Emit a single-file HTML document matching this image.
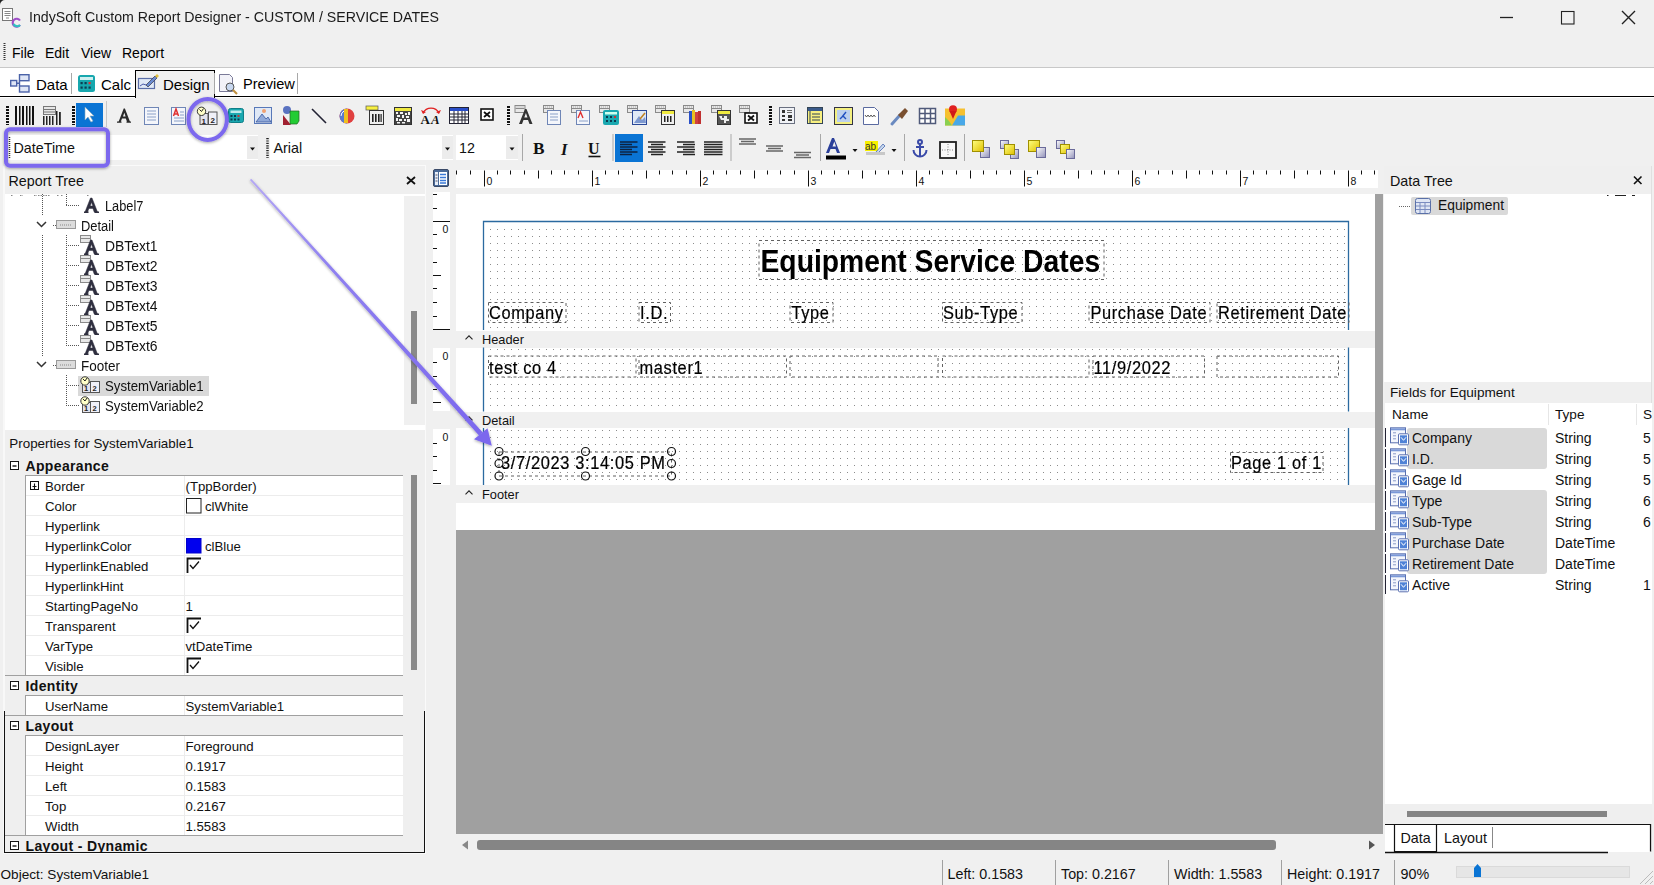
<!DOCTYPE html>
<html><head><meta charset="utf-8">
<style>
*{margin:0;padding:0;box-sizing:border-box}
html,body{width:1654px;height:885px;overflow:hidden;background:#f0f0f0;font-family:"Liberation Sans",sans-serif;color:#000;position:relative}
.a{position:absolute}
.t{position:absolute;white-space:pre;line-height:1}
svg{position:absolute;overflow:visible}
</style></head><body>
<!-- TITLE BAR --><svg id="corner" style="left:0;top:0" width="8" height="8"><path d="M0 0h5a5 5 0 0 0-5 5z" fill="#222"/></svg>
<div class="t" style="left:29px;top:10.0px;font-size:14.2px;color:#1b1b1b;transform:scaleY(1.08);transform-origin:0 12.07px">IndySoft Custom Report Designer - CUSTOM / SERVICE DATES</div>
<svg style="left:0;top:0" width="1654" height="40">
 <!-- app icon -->
 <rect x="2.5" y="8.5" width="10" height="12" fill="#fff" stroke="#777" stroke-width="1"/>
 <path d="M4.5 11.5h6M4.5 13.5h6M4.5 15.5h6M6 18h3" stroke="#888" stroke-width="1"/>
 <path d="M20 20.5a4 4 0 1 0 0 4.5" stroke="#a04fc9" stroke-width="2.2" fill="none"/>
 <path d="M13.5 24a4 4 0 0 0 6.5 1" stroke="#30c0c0" stroke-width="2.2" fill="none"/>
 <!-- window controls -->
 <path d="M1500 17.5h13" stroke="#222" stroke-width="1.3"/>
 <rect x="1561.5" y="11.5" width="12.5" height="12.5" fill="none" stroke="#222" stroke-width="1.1"/>
 <path d="M1622 11l13 13M1635 11l-13 13" stroke="#222" stroke-width="1.4"/>
</svg>
<!-- MENU -->
<svg style="left:0;top:0" width="10" height="70"><path d="M4.5 43v17" stroke="#333" stroke-width="2" stroke-dasharray="1 1"/></svg>
<div class="t" style="left:12px;top:46px;font-size:14px;color:#000">File</div>
<div class="t" style="left:45px;top:46px;font-size:14px">Edit</div>
<div class="t" style="left:81px;top:46px;font-size:14px">View</div>
<div class="t" style="left:122px;top:46px;font-size:14px">Report</div>
<div class="a" style="left:0;top:67px;width:1654px;height:1px;background:#c8c8c8"></div>
<!-- TABS -->
<div class="a" style="left:0;top:68px;width:1654px;height:28px;background:#fff"></div>
<div class="a" style="left:0;top:96px;width:1654px;height:1px;background:#000"></div><div class="a" style="left:0;top:97px;width:1654px;height:1px;background:#fff"></div>
<div class="a" style="left:135px;top:70px;width:80px;height:28px;background:#f0f0f0;border:1px solid #000;border-bottom:none"></div>
<div class="t" style="left:36px;top:77px;font-size:15px">Data</div>
<div class="t" style="left:101px;top:77px;font-size:15px">Calc</div>
<div class="t" style="left:163px;top:77px;font-size:15px">Design</div>
<div class="t" style="left:243px;top:77px;font-size:14.6px">Preview</div>

<svg style="left:0;top:97px" width="1654" height="34">
<defs>
 <g id="grip"><path d="M1.5 9v19" stroke="#111" stroke-width="3" stroke-dasharray="2 1"/></g>
 <g id="dbt"><rect x="0.5" y="0.5" width="10" height="7" fill="#e8e8e8" stroke="#8a8a8a"/><path d="M1 3.5h9" stroke="#8a8a8a"/><path d="M2 2h7" stroke="#aaa" stroke-dasharray="1 1"/></g>
</defs>
<use href="#grip" x="6"/>
<!-- barcode -->
<g fill="#111"><rect x="15" y="9" width="2" height="19"/><rect x="19" y="9" width="1.5" height="19"/><rect x="22" y="9" width="2" height="19"/><rect x="26" y="9" width="1.5" height="19"/><rect x="29" y="9" width="1.5" height="19"/><rect x="32" y="9" width="2" height="19"/></g>
<!-- 2d table barcode -->
<g><rect x="43.5" y="9.5" width="12" height="8" fill="#e6e6e6" stroke="#777"/><path d="M44 12.5h11M44 15h11" stroke="#777"/></g>
<g fill="#222"><rect x="43" y="19" width="1.5" height="9"/><rect x="46" y="19" width="1.5" height="9"/><rect x="49" y="19" width="1.5" height="9"/><rect x="52" y="19" width="1.5" height="9"/><rect x="56" y="14" width="1.5" height="14"/><rect x="59" y="15" width="1.8" height="13"/></g>
<use href="#grip" x="72"/>
<!-- pointer btn -->
<rect x="76" y="6" width="27" height="24" fill="#0a74d4"/>
<path d="M85 10v13l3-3 3 5 2-1-3-5h4z" fill="#fff" stroke="#8ab" stroke-width="0.6"/>
<path d="M106.5 4v26" stroke="#c8c8c8"/>
<!-- A -->
<path d="M118.5 25l5.2-13.5h1.2l5.2 13.5h-3l-1.3-3.6h-3.8l-1.3 3.6z M123 19.5h2.6l-1.3-3.8z" fill="#2a2a2a"/>
<path d="M117 25.2h4.5M126.5 25.2h4.5" stroke="#2a2a2a" stroke-width="1.2"/>
<!-- memo -->
<rect x="144.5" y="10.5" width="14" height="17" fill="#f4f6fb" stroke="#6f86b6"/><path d="M147 14h9M147 17h9M147 20h9M147 23h9" stroke="#8aa0c8"/>
<!-- richtext -->
<rect x="171.5" y="10.5" width="14" height="17" fill="#f4f6fb" stroke="#6f86b6"/><path d="M180 15h4M180 18h4M174 21h10M174 24h10" stroke="#8aa0c8"/><path d="M173.5 19l2.5-7 2.5 7M174.3 17h3.4" stroke="#e03030" stroke-width="1.5" fill="none"/>
<!-- sysvar -->
<rect x="200" y="16.5" width="8" height="11" fill="#e4e4ee" stroke="#555"/><rect x="208.5" y="15" width="8.5" height="12.5" fill="#f0f0f8" stroke="#555"/>
<circle cx="201.5" cy="14.3" r="4.2" fill="#ffffc8" stroke="#333" stroke-width="1"/><path d="M199.5 12.5l2 2 2-3" stroke="#222" fill="none" stroke-width="1"/>
<text x="201.5" y="26.5" font-size="8" font-weight="bold" fill="#222">1</text><text x="210.5" y="25.5" font-size="8" font-weight="bold" fill="#222">2</text>
<!-- calc -->
<rect x="228.5" y="11.5" width="15" height="14" rx="2" fill="#1aa8b0" stroke="#0f7f88"/><rect x="230.5" y="13.5" width="11" height="2.5" fill="#bfeaec"/><g fill="#0b3a50"><rect x="230.5" y="18" width="2" height="2"/><rect x="234" y="18" width="2" height="2"/><rect x="237.5" y="18" width="2" height="2" fill="#c33"/><rect x="230.5" y="21.5" width="2" height="2"/><rect x="234" y="21.5" width="2" height="2"/><rect x="237.5" y="21.5" width="2" height="2"/></g>
<!-- image -->
<rect x="254.5" y="10.5" width="17" height="16" fill="#dfe8f6" stroke="#5878b8"/><path d="M256 25l6-8 4 5 2-2 3 5z" fill="#8fa8d8" stroke="#3a58a0" stroke-width="0.8"/><circle cx="264" cy="14" r="2" fill="#f0a070"/>
<!-- shapes -->
<circle cx="287" cy="13" r="4" fill="#5a72c0"/><path d="M283 18l8 10h-8z" fill="#a02030"/><path d="M290 14h9v10l-2 3h-7z" fill="#22cc33" stroke="#226622" stroke-width="0.7"/>
<!-- line -->
<path d="M312 12l14 14" stroke="#223" stroke-width="1.6"/>
<!-- chart -->
<circle cx="347" cy="19" r="7.5" fill="#e04040"/><path d="M347 11.5a7.5 7.5 0 0 0 0 15z" fill="#5a7ad0"/><rect x="344" y="12" width="4" height="14" fill="#f0c020"/><path d="M341 19a6 6 0 0 1 3-5" stroke="#fff" fill="none"/>
<!-- barcode box -->
<rect x="366" y="9" width="12" height="4" fill="#f8f040" stroke="#555" stroke-width="0.7"/><rect x="369.5" y="13.5" width="14" height="14" fill="#f0f0f0" stroke="#333"/><g fill="#222"><rect x="372" y="17" width="1.6" height="8"/><rect x="375" y="17" width="1.6" height="8"/><rect x="378" y="17" width="1.6" height="8"/><rect x="380.5" y="17" width="1.2" height="8"/></g>
<!-- 2d barcode -->
<rect x="394.5" y="10.5" width="17" height="17" fill="#444" stroke="#333"/><rect x="395" y="11" width="16" height="3" fill="#f0ea40"/><path d="M396 15h2v2h-2zM400 15h3v2h-3zM405 16h2v2h-2zM408 15h2v3h-2zM397 18h3v2h-3zM402 18h2v3h-2zM406 19h3v2h-3zM396 21h2v3h-2zM399 22h3v2h-3zM404 22h2v2h-2zM407 22h3v3h-3zM397 25h3v1.5h-3zM402 25h3v1.5h-3z" fill="#f4f4f4"/>
<!-- AA -->
<path d="M423 16a9 9 0 0 1 16 0" stroke="#e02020" stroke-width="1.3" fill="none"/><path d="M421 13l2 4 3-2zM441 13l-2 4-3-2z" fill="#e02020"/>
<text x="420.5" y="27" font-family="Liberation Serif" font-weight="bold" font-size="13" fill="#111">A</text><text x="431" y="27" font-family="Liberation Serif" font-weight="bold" font-style="italic" font-size="13" fill="#111">A</text>
<!-- calendar -->
<rect x="449.5" y="10.5" width="19" height="16" fill="#fff" stroke="#223"/><rect x="450" y="11" width="18" height="3" fill="#2a4ec8"/><path d="M450 17h18M450 20h18M450 23h18M454 14v12M458 14v12M462 14v12M465 14v12" stroke="#223" stroke-width="1"/>
<!-- X box -->
<rect x="481" y="12" width="12" height="11" fill="#fff" stroke="#111" stroke-width="1.6"/><path d="M484 15l6 5M490 15l-6 5" stroke="#111" stroke-width="1.8"/>
<use href="#grip" x="507"/>
<!-- DB icons -->
<use href="#dbt" x="514.5" y="8"/><path d="M519 27l6-15h1.5l6 15h-3l-1.5-4h-4.5l-1.5 4z M524.3 20.5h3.2l-1.6-4.6z" fill="#333"/>
<use href="#dbt" x="543" y="8"/><rect x="547.5" y="13.5" width="13" height="14" fill="#f4f6fb" stroke="#6f86b6"/><path d="M550 17h8M550 20h8M550 23h8" stroke="#8aa0c8"/>
<use href="#dbt" x="571" y="8"/><rect x="576.5" y="13.5" width="13" height="14" fill="#f4f6fb" stroke="#6f86b6"/><path d="M578 21l2.5-6 2.5 6" stroke="#e03030" stroke-width="1.4" fill="none"/><path d="M579 24h9" stroke="#8aa0c8"/>
<use href="#dbt" x="599" y="8"/><rect x="603" y="13" width="16" height="15" rx="2" fill="#1aa8b0"/><rect x="605" y="15" width="12" height="2.5" fill="#cfe"/><g fill="#0b3a50"><rect x="606" y="19" width="2" height="2"/><rect x="610" y="19" width="2" height="2"/><rect x="614" y="19" width="2" height="2" fill="#c33"/><rect x="606" y="23" width="2" height="2"/><rect x="610" y="23" width="2" height="2"/><rect x="614" y="23" width="2" height="2"/></g>
<use href="#dbt" x="627" y="8"/><rect x="632.5" y="13.5" width="14" height="14" fill="#dfe8f6" stroke="#2a4898"/><path d="M634 26l5-7 3 4 3-3 1 6z" fill="#7d98d0"/><path d="M640 22l5-6" stroke="#c08020" stroke-width="1.5"/>
<use href="#dbt" x="655" y="8"/><rect x="661.5" y="13.5" width="13" height="14" fill="#f0f0f0" stroke="#333"/><rect x="662" y="14" width="12" height="3" fill="#f0ea40"/><g fill="#222"><rect x="664" y="19" width="1.5" height="6"/><rect x="667" y="19" width="1.5" height="6"/><rect x="670" y="19" width="1.5" height="6"/></g>
<use href="#dbt" x="683" y="8"/><rect x="689" y="14" width="3" height="13" fill="#2a50c8"/><rect x="692" y="13" width="3" height="14" fill="#e8c020"/><rect x="695" y="15" width="3" height="12" fill="#d04040"/><rect x="698" y="14" width="3" height="13" fill="#c03030"/>
<use href="#dbt" x="711" y="8"/><rect x="717.5" y="13.5" width="13" height="14" fill="#555" stroke="#333"/><rect x="718" y="14" width="12" height="3" fill="#f0ea40"/><path d="M719 19h3v2h2v-2h3v3h2v2h-3v2h-2v-3h-3z" fill="#eee"/>
<use href="#dbt" x="739" y="8"/><rect x="745" y="16" width="12" height="10" fill="#fff" stroke="#111" stroke-width="1.6"/><path d="M748 18.5l6 5M754 18.5l-6 5" stroke="#111" stroke-width="1.8"/>
<use href="#grip" x="769"/>
<!-- right icons -->
<rect x="779.5" y="10.5" width="15" height="16" fill="#f0f2f6" stroke="#6a7080"/><g fill="#333"><rect x="782" y="13" width="3" height="3"/><rect x="782" y="18" width="3" height="2"/><rect x="782" y="22" width="3" height="2"/><rect x="788" y="18" width="4" height="3"/><rect x="788" y="22" width="4" height="2"/></g><path d="M787 13.5h5M787 15.5h5" stroke="#666"/>
<rect x="807.5" y="10.5" width="15" height="16" fill="#f8f080" stroke="#345"/><rect x="808" y="11" width="14" height="3" fill="#3a5a8a"/><path d="M810 14v12" stroke="#345"/><path d="M812 17h8M812 20h8M812 23h8" stroke="#345"/>
<rect x="834.5" y="10.5" width="18" height="17" fill="#f4f080" stroke="#334"/><rect x="837" y="13" width="13" height="12" fill="#bcd0ee"/><path d="M840 22l3-3 3 3M846 15l-4 5" stroke="#2050c0" stroke-width="1.4" fill="none"/>
<path d="M863.5 10.5h11l4 4v13h-15z" fill="#fff" stroke="#5a6aa0"/><path d="M865 18l1.5 2 1.5-2 1.5 2 1.5-2 1.5 2 1.5-2 1.5 2" stroke="#333" fill="none" stroke-width="0.8"/>
<path d="M892 27l8-9" stroke="#6a8ac0" stroke-width="3" stroke-linecap="round"/><path d="M898 18l4 4 6-8-3-3z" fill="#7a5030"/>
<rect x="919.5" y="11.5" width="16" height="15" fill="#fff" stroke="#505a7a" stroke-width="1.5"/><path d="M925 12v14M930.5 12v14M920 16.5h15M920 21.5h15" stroke="#505a7a" stroke-width="1.5"/>
<rect x="945" y="11.5" width="20" height="17" fill="#f6c030"/><path d="M952 28.5l6-10h7v10z" fill="#48a8e8"/><path d="M945 20l4 4 3 4.5h-7z" fill="#8ad050"/><circle cx="953" cy="12.3" r="4" fill="#e02020"/><path d="M949.5 14l3.5 8 3.5-8z" fill="#d01818"/>
</svg>

<div class="a" style="left:8px;top:135px;width:250px;height:25px;background:#fff"></div>
<div class="a" style="left:247px;top:136px;width:11px;height:23px;background:#ececec"></div>
<div class="t" style="left:13.5px;top:140.5px;font-size:14.3px;color:#111">DateTime</div>
<div class="a" style="left:270px;top:135px;width:183px;height:25px;background:#fff"></div>
<div class="a" style="left:442px;top:136px;width:11px;height:23px;background:#ececec"></div>
<div class="t" style="left:273.5px;top:140.5px;font-size:14.3px;color:#111">Arial</div>
<div class="a" style="left:456px;top:135px;width:62px;height:25px;background:#fff"></div>
<div class="a" style="left:506px;top:136px;width:12px;height:23px;background:#ececec"></div>
<div class="t" style="left:459px;top:140.5px;font-size:14.3px;color:#111">12</div>
<svg style="left:0;top:131px" width="1654" height="34">
 <path d="M250 16.5h5l-2.5 3z" fill="#111"/>
 <path d="M445 16.5h5l-2.5 3z" fill="#111"/>
 <path d="M509.5 16.5h5l-2.5 3z" fill="#111"/>
 <path d="M9.5 6v22" stroke="#333" stroke-width="1.5" stroke-dasharray="1 1"/>
 <path d="M267.5 7v20" stroke="#222" stroke-width="2.5" stroke-dasharray="1.2 1.2"/>
 <path d="M522.5 3v27M613 3v27M731 3v27M820.5 3v27M904.5 3v27M964.5 3v27" stroke="#a8a8a8"/>
 <!-- B I U -->
 <text x="533" y="23.5" font-family="Liberation Serif" font-weight="bold" font-size="16" fill="#111" transform="translate(533 0) scale(1.08 1) translate(-533 0)">B</text>
 <text x="561" y="23.5" font-family="Liberation Serif" font-weight="bold" font-style="italic" font-size="16.5" fill="#111">I</text>
 <text x="588" y="23" font-family="Liberation Serif" font-weight="bold" font-size="16" fill="#111">U</text>
 <path d="M588.5 25.5h12" stroke="#111" stroke-width="1.6"/>
 <!-- align -->
 <rect x="615" y="3" width="28" height="28" fill="#0a74d4"/>
 <g stroke="#0d2240" stroke-width="1.4"><path d="M620 11h17.5M620 13.5h12M620 16h17.5M620 18.5h12M620 21h17.5M620 23.5h12"/></g>
 <g stroke="#222" stroke-width="1.4"><path d="M648 11h17.5M651 13.5h12M648 16h17.5M651 18.5h12M648 21h17.5M651 23.5h12"/>
 <path d="M677 11h17.5M683 13.5h12M677 16h17.5M683 18.5h12M677 21h17.5M683 23.5h12"/>
 <path d="M704 11h18.5M704 13.5h18.5M704 16h18.5M704 18.5h18.5M704 21h18.5M704 23.5h18.5"/></g>
 <g stroke="#666" stroke-width="1.3"><path d="M739 8h17M741 10.5h13M739 13h17"/><path d="M766 15h17M768 17.5h13M766 20h17"/><path d="M794 21.5h17M796 24h13M794 26.5h17"/></g>
 <!-- font color -->
 <path d="M826 22l6-15h2l6 15h-3l-1.5-4h-5l-1.5 4z M832.5 15.5h3.5l-1.7-5z" fill="#2a3f9a"/>
 <rect x="826" y="24.5" width="20" height="4" fill="#000"/>
 <path d="M852.5 18h5l-2.5 3z" fill="#111"/>
 <rect x="865" y="10" width="13" height="10" fill="#f8f000"/>
 <text x="865" y="19" font-size="10" fill="#333">ab</text>
 <path d="M876 21l7-8 2 2-7 7z" fill="#c8d8ee" stroke="#4a6ab0" stroke-width="0.8"/>
 <rect x="866" y="21" width="19" height="3" fill="#c8c8c8"/>
 <path d="M891.5 18h5l-2.5 3z" fill="#111"/>
 <!-- anchor -->
 <g stroke="#3a4aa8" stroke-width="2" fill="none"><circle cx="920" cy="11" r="2"/><path d="M920 13v12M913.5 19a6.5 6.5 0 0 0 13 0"/><path d="M916 16h8"/></g>
 <!-- box -->
 <rect x="940" y="11" width="16" height="16" fill="#fafafa" stroke="#222" stroke-width="1.8"/>
 <path d="M948 13v12M942 19h12" stroke="#666" stroke-width="0.8" stroke-dasharray="1 1.5"/>
 <!-- yellow squares -->
 <defs><linearGradient id="yg" x1="0" y1="0" x2="1" y2="1"><stop offset="0" stop-color="#ffff80"/><stop offset="1" stop-color="#e0c000"/></linearGradient>
 <linearGradient id="wg" x1="0" y1="0" x2="1" y2="1"><stop offset="0" stop-color="#ffffff"/><stop offset="1" stop-color="#9090b8"/></linearGradient></defs>
 <rect x="980.5" y="16.5" width="9" height="10" fill="url(#wg)" stroke="#6a6a9a"/><rect x="972.5" y="9.5" width="11" height="11" fill="url(#yg)" stroke="#a09000"/>
 <rect x="1000.5" y="9.5" width="8" height="8" fill="url(#wg)" stroke="#6a6a9a"/><rect x="1010.5" y="18.5" width="8" height="9" fill="url(#wg)" stroke="#6a6a9a"/><rect x="1004.5" y="13.5" width="10" height="10" fill="url(#yg)" stroke="#a09000"/>
 <rect x="1028.5" y="9.5" width="11" height="11" fill="url(#yg)" stroke="#a09000"/><rect x="1036.5" y="16.5" width="9" height="10" fill="url(#wg)" stroke="#6a6a9a"/>
 <rect x="1056.5" y="9.5" width="8" height="8" fill="url(#wg)" stroke="#6a6a9a"/><rect x="1060.5" y="13.5" width="9" height="9" fill="url(#yg)" stroke="#a09000"/><rect x="1066.5" y="18.5" width="8" height="9" fill="url(#wg)" stroke="#6a6a9a"/>
</svg>

<!--LEFT--><div class="a" style="left:3px;top:166px;width:2px;height:688px;background:#f8f8f8"></div>
<div class="a" style="left:5px;top:165px;width:421px;height:1px;background:#fafafa"></div><div class="a" style="left:425px;top:165px;width:1px;height:689px;background:#fafafa"></div><div class="a" style="left:5px;top:166px;width:420px;height:28px;background:#efefef"></div>
<div class="t" style="left:8.5px;top:173.5px;font-size:14.3px;color:#111">Report Tree</div>
<svg style="left:405px;top:175px" width="12" height="12"><path d="M2 2l8 7M10 2l-8 7" stroke="#111" stroke-width="1.8"/></svg>
<div class="a" style="left:5px;top:194px;width:399px;height:236px;background:#fff"></div><div class="a" style="left:404px;top:194px;width:21px;height:2px;background:#fff"></div>
<div class="a" style="left:404px;top:425px;width:21px;height:5px;background:#fff"></div>
<div class="a" style="left:411px;top:311px;width:6px;height:93px;background:#8a8a8a"></div>
<div class="a" style="left:78px;top:376px;width:131px;height:20px;background:#d9d9d9"></div>
<svg style="left:0;top:0" width="430" height="430">
<path d="M11 195.5h2.5M20 195.5h3M34 195.5h3M38 195.5h12M57 195.5h2M61 195.5h2M87 195.5h1.5" stroke="#888" stroke-width="1" stroke-dasharray="1.5 1"/>
<path d="M42.5 194V216" stroke="#555" stroke-width="1" stroke-dasharray="1 1"/>
<path d="M42.5 235V356" stroke="#555" stroke-width="1" stroke-dasharray="1 1"/>
<path d="M66.5 194V206" stroke="#555" stroke-width="1" stroke-dasharray="1 1"/>
<path d="M66 205.5H80" stroke="#555" stroke-width="1" stroke-dasharray="1 1"/>
<path d="M53 225.5H58" stroke="#555" stroke-width="1" stroke-dasharray="1 1"/>
<path d="M53 365.5H58" stroke="#555" stroke-width="1" stroke-dasharray="1 1"/>
<path d="M66.5 235V346" stroke="#555" stroke-width="1" stroke-dasharray="1 1"/>
<path d="M66 245.5H80" stroke="#555" stroke-width="1" stroke-dasharray="1 1"/>
<path d="M66 265.5H80" stroke="#555" stroke-width="1" stroke-dasharray="1 1"/>
<path d="M66 285.5H80" stroke="#555" stroke-width="1" stroke-dasharray="1 1"/>
<path d="M66 305.5H80" stroke="#555" stroke-width="1" stroke-dasharray="1 1"/>
<path d="M66 325.5H80" stroke="#555" stroke-width="1" stroke-dasharray="1 1"/>
<path d="M66 345.5H80" stroke="#555" stroke-width="1" stroke-dasharray="1 1"/>
<path d="M66.5 375V406" stroke="#555" stroke-width="1" stroke-dasharray="1 1"/>
<path d="M66 385.5H80" stroke="#555" stroke-width="1" stroke-dasharray="1 1"/>
<path d="M66 405.5H80" stroke="#555" stroke-width="1" stroke-dasharray="1 1"/>
<path d="M37 222l4.5 4.5 4.5-4.5" stroke="#333" stroke-width="1.5" fill="none"/>
<path d="M37 362l4.5 4.5 4.5-4.5" stroke="#333" stroke-width="1.5" fill="none"/>
<rect x="56.5" y="220.5" width="19" height="8" fill="#dcdcdc" stroke="#9a9a9a"/><path d="M60 225h11" stroke="#888" stroke-dasharray="1 1"/>
<rect x="56.5" y="360.5" width="19" height="8" fill="#dcdcdc" stroke="#9a9a9a"/><path d="M60 365h11" stroke="#888" stroke-dasharray="1 1"/>
<path d="M85 212l5.5-14h1.5l5.5 14h-3.3l-1.3-3.6h-4l-1.3 3.6z M90.2 206h2.6l-1.3-3.8z" fill="#2e2e3e" stroke="#2e2e3e" stroke-width="0.5" stroke-linejoin="round"/><path d="M84 212.3h4.5M94.5 212.3h4.5" stroke="#2e2e3e" stroke-width="1.5"/>
<rect x="80.5" y="235.5" width="10" height="7" fill="#e8e8e8" stroke="#8a8a8a"/><path d="M81 238.5h9" stroke="#8a8a8a"/>
<path d="M85 254l5.5-14h1.5l5.5 14h-3.3l-1.3-3.6h-4l-1.3 3.6z M90.2 248h2.6l-1.3-3.8z" fill="#2e2e3e" stroke="#2e2e3e" stroke-width="0.5" stroke-linejoin="round"/><path d="M84 254.3h4.5M94.5 254.3h4.5" stroke="#2e2e3e" stroke-width="1.5"/>
<rect x="80.5" y="255.5" width="10" height="7" fill="#e8e8e8" stroke="#8a8a8a"/><path d="M81 258.5h9" stroke="#8a8a8a"/>
<path d="M85 274l5.5-14h1.5l5.5 14h-3.3l-1.3-3.6h-4l-1.3 3.6z M90.2 268h2.6l-1.3-3.8z" fill="#2e2e3e" stroke="#2e2e3e" stroke-width="0.5" stroke-linejoin="round"/><path d="M84 274.3h4.5M94.5 274.3h4.5" stroke="#2e2e3e" stroke-width="1.5"/>
<rect x="80.5" y="275.5" width="10" height="7" fill="#e8e8e8" stroke="#8a8a8a"/><path d="M81 278.5h9" stroke="#8a8a8a"/>
<path d="M85 294l5.5-14h1.5l5.5 14h-3.3l-1.3-3.6h-4l-1.3 3.6z M90.2 288h2.6l-1.3-3.8z" fill="#2e2e3e" stroke="#2e2e3e" stroke-width="0.5" stroke-linejoin="round"/><path d="M84 294.3h4.5M94.5 294.3h4.5" stroke="#2e2e3e" stroke-width="1.5"/>
<rect x="80.5" y="295.5" width="10" height="7" fill="#e8e8e8" stroke="#8a8a8a"/><path d="M81 298.5h9" stroke="#8a8a8a"/>
<path d="M85 314l5.5-14h1.5l5.5 14h-3.3l-1.3-3.6h-4l-1.3 3.6z M90.2 308h2.6l-1.3-3.8z" fill="#2e2e3e" stroke="#2e2e3e" stroke-width="0.5" stroke-linejoin="round"/><path d="M84 314.3h4.5M94.5 314.3h4.5" stroke="#2e2e3e" stroke-width="1.5"/>
<rect x="80.5" y="315.5" width="10" height="7" fill="#e8e8e8" stroke="#8a8a8a"/><path d="M81 318.5h9" stroke="#8a8a8a"/>
<path d="M85 334l5.5-14h1.5l5.5 14h-3.3l-1.3-3.6h-4l-1.3 3.6z M90.2 328h2.6l-1.3-3.8z" fill="#2e2e3e" stroke="#2e2e3e" stroke-width="0.5" stroke-linejoin="round"/><path d="M84 334.3h4.5M94.5 334.3h4.5" stroke="#2e2e3e" stroke-width="1.5"/>
<rect x="80.5" y="335.5" width="10" height="7" fill="#e8e8e8" stroke="#8a8a8a"/><path d="M81 338.5h9" stroke="#8a8a8a"/>
<path d="M85 354l5.5-14h1.5l5.5 14h-3.3l-1.3-3.6h-4l-1.3 3.6z M90.2 348h2.6l-1.3-3.8z" fill="#2e2e3e" stroke="#2e2e3e" stroke-width="0.5" stroke-linejoin="round"/><path d="M84 354.3h4.5M94.5 354.3h4.5" stroke="#2e2e3e" stroke-width="1.5"/>
<rect x="82.5" y="382.5" width="8" height="10" fill="#e4e4ee" stroke="#555"/><rect x="90.5" y="381.5" width="9" height="11" fill="#f0f0f8" stroke="#555"/>
<text x="84" y="391" font-size="7.5" font-weight="bold" fill="#222">1</text><text x="92.5" y="390.5" font-size="7.5" font-weight="bold" fill="#222">2</text>
<circle cx="85" cy="381" r="4.2" fill="#ffffc8" stroke="#333" stroke-width="1"/><path d="M83 379l2 2 2-3" stroke="#222" fill="none" stroke-width="1"/>
<rect x="82.5" y="402.5" width="8" height="10" fill="#e4e4ee" stroke="#555"/><rect x="90.5" y="401.5" width="9" height="11" fill="#f0f0f8" stroke="#555"/>
<text x="84" y="411" font-size="7.5" font-weight="bold" fill="#222">1</text><text x="92.5" y="410.5" font-size="7.5" font-weight="bold" fill="#222">2</text>
<circle cx="85" cy="401" r="4.2" fill="#ffffc8" stroke="#333" stroke-width="1"/><path d="M83 399l2 2 2-3" stroke="#222" fill="none" stroke-width="1"/>
</svg>
<div class="t" style="left:105px;top:200.62px;font-size:12.8px;color:#111;transform:scaleY(1.121);transform-origin:0 10.88px">Label7</div>
<div class="t" style="left:81px;top:220.53px;font-size:12.9px;color:#111;transform:scaleY(1.112);transform-origin:0 10.96px">Detail</div>
<div class="t" style="left:105px;top:239.69px;font-size:13.9px;color:#111;transform:scaleY(1.032);transform-origin:0 11.81px">DBText1</div>
<div class="t" style="left:105px;top:259.69px;font-size:13.9px;color:#111;transform:scaleY(1.032);transform-origin:0 11.81px">DBText2</div>
<div class="t" style="left:105px;top:279.69px;font-size:13.9px;color:#111;transform:scaleY(1.032);transform-origin:0 11.81px">DBText3</div>
<div class="t" style="left:105px;top:299.69px;font-size:13.9px;color:#111;transform:scaleY(1.032);transform-origin:0 11.81px">DBText4</div>
<div class="t" style="left:105px;top:319.69px;font-size:13.9px;color:#111;transform:scaleY(1.032);transform-origin:0 11.81px">DBText5</div>
<div class="t" style="left:105px;top:339.69px;font-size:13.9px;color:#111;transform:scaleY(1.032);transform-origin:0 11.81px">DBText6</div>
<div class="t" style="left:81px;top:360.02px;font-size:13.5px;color:#111;transform:scaleY(1.063);transform-origin:0 11.47px">Footer</div>
<div class="t" style="left:105px;top:380.28px;font-size:13.2px;color:#111;transform:scaleY(1.087);transform-origin:0 11.22px">SystemVariable1</div>
<div class="t" style="left:105px;top:400.28px;font-size:13.2px;color:#111;transform:scaleY(1.087);transform-origin:0 11.22px">SystemVariable2</div>
<div class="a" style="left:5px;top:430px;width:420px;height:424px;background:#efefef"></div>
<div class="t" style="left:9.3px;top:436.5px;font-size:13.4px;color:#111">Properties for SystemVariable1</div>
<div class="a" style="left:25px;top:475px;width:378px;height:377px;background:#fff"></div>
<div class="a" style="left:411px;top:475px;width:6px;height:195px;background:#8a8a8a"></div>
<div class="a" style="left:5px;top:456px;width:398px;height:20px;background:#efefef"></div>
<div class="t" style="left:25.5px;top:459px;font-size:14px;font-weight:bold;letter-spacing:0.35px;color:#111">Appearance</div>
<div class="a" style="left:5px;top:476px;width:20px;height:20px;background:#efefef"></div>
<div class="t" style="left:45px;top:479.5px;font-size:13.2px;color:#111">Border</div>
<div class="t" style="left:185.5px;top:479.5px;font-size:13.2px;color:#111">(TppBorder)</div>
<div class="a" style="left:5px;top:496px;width:20px;height:20px;background:#efefef"></div>
<div class="t" style="left:45px;top:499.5px;font-size:13.2px;color:#111">Color</div>
<div class="t" style="left:205px;top:499.5px;font-size:13.2px;color:#111">clWhite</div>
<div class="a" style="left:5px;top:516px;width:20px;height:20px;background:#efefef"></div>
<div class="t" style="left:45px;top:519.5px;font-size:13.2px;color:#111">Hyperlink</div>
<div class="a" style="left:5px;top:536px;width:20px;height:20px;background:#efefef"></div>
<div class="t" style="left:45px;top:539.5px;font-size:13.2px;color:#111">HyperlinkColor</div>
<div class="t" style="left:205px;top:539.5px;font-size:13.2px;color:#111">clBlue</div>
<div class="a" style="left:5px;top:556px;width:20px;height:20px;background:#efefef"></div>
<div class="t" style="left:45px;top:559.5px;font-size:13.2px;color:#111">HyperlinkEnabled</div>
<div class="a" style="left:5px;top:576px;width:20px;height:20px;background:#efefef"></div>
<div class="t" style="left:45px;top:579.5px;font-size:13.2px;color:#111">HyperlinkHint</div>
<div class="a" style="left:5px;top:596px;width:20px;height:20px;background:#efefef"></div>
<div class="t" style="left:45px;top:599.5px;font-size:13.2px;color:#111">StartingPageNo</div>
<div class="t" style="left:185.5px;top:599.5px;font-size:13.2px;color:#111">1</div>
<div class="a" style="left:5px;top:616px;width:20px;height:20px;background:#efefef"></div>
<div class="t" style="left:45px;top:619.5px;font-size:13.2px;color:#111">Transparent</div>
<div class="a" style="left:5px;top:636px;width:20px;height:20px;background:#efefef"></div>
<div class="t" style="left:45px;top:639.5px;font-size:13.2px;color:#111">VarType</div>
<div class="t" style="left:185.5px;top:639.5px;font-size:13.2px;color:#111">vtDateTime</div>
<div class="a" style="left:5px;top:656px;width:20px;height:20px;background:#efefef"></div>
<div class="t" style="left:45px;top:659.5px;font-size:13.2px;color:#111">Visible</div>
<div class="a" style="left:5px;top:676px;width:398px;height:20px;background:#efefef"></div>
<div class="t" style="left:25.5px;top:679px;font-size:14px;font-weight:bold;letter-spacing:0.35px;color:#111">Identity</div>
<div class="a" style="left:5px;top:696px;width:20px;height:20px;background:#efefef"></div>
<div class="t" style="left:45px;top:699.5px;font-size:13.2px;color:#111">UserName</div>
<div class="t" style="left:185.5px;top:699.5px;font-size:13.2px;color:#111">SystemVariable1</div>
<div class="a" style="left:5px;top:716px;width:398px;height:20px;background:#efefef"></div>
<div class="t" style="left:25.5px;top:719px;font-size:14px;font-weight:bold;letter-spacing:0.35px;color:#111">Layout</div>
<div class="a" style="left:5px;top:736px;width:20px;height:20px;background:#efefef"></div>
<div class="t" style="left:45px;top:739.5px;font-size:13.2px;color:#111">DesignLayer</div>
<div class="t" style="left:185.5px;top:739.5px;font-size:13.2px;color:#111">Foreground</div>
<div class="a" style="left:5px;top:756px;width:20px;height:20px;background:#efefef"></div>
<div class="t" style="left:45px;top:759.5px;font-size:13.2px;color:#111">Height</div>
<div class="t" style="left:185.5px;top:759.5px;font-size:13.2px;color:#111">0.1917</div>
<div class="a" style="left:5px;top:776px;width:20px;height:20px;background:#efefef"></div>
<div class="t" style="left:45px;top:779.5px;font-size:13.2px;color:#111">Left</div>
<div class="t" style="left:185.5px;top:779.5px;font-size:13.2px;color:#111">0.1583</div>
<div class="a" style="left:5px;top:796px;width:20px;height:20px;background:#efefef"></div>
<div class="t" style="left:45px;top:799.5px;font-size:13.2px;color:#111">Top</div>
<div class="t" style="left:185.5px;top:799.5px;font-size:13.2px;color:#111">0.2167</div>
<div class="a" style="left:5px;top:816px;width:20px;height:20px;background:#efefef"></div>
<div class="t" style="left:45px;top:819.5px;font-size:13.2px;color:#111">Width</div>
<div class="t" style="left:185.5px;top:819.5px;font-size:13.2px;color:#111">1.5583</div>
<div class="a" style="left:5px;top:836px;width:398px;height:20px;background:#efefef"></div>
<div class="t" style="left:25.5px;top:839px;font-size:14px;font-weight:bold;letter-spacing:0.35px;color:#111">Layout - Dynamic</div>
<svg style="left:0;top:0" width="430" height="860">
<path d="M25 475.5H403" stroke="#a0a0a0"/>
<rect x="10.5" y="461.5" width="8" height="8" fill="#fff" stroke="#111" stroke-width="1"/><path d="M12.5 466h4" stroke="#111" stroke-width="1.4"/>
<path d="M25.5 476V496" stroke="#a0a0a0"/>
<path d="M26 495.5H403" stroke="#ececec"/>
<path d="M184.5 476V495" stroke="#ececec"/>
<rect x="30.5" y="481.5" width="8" height="8" fill="#fff" stroke="#111"/><path d="M32.5 486.5h4M34.5 483.5v6" stroke="#111" stroke-width="1.1"/>
<path d="M25.5 496V516" stroke="#a0a0a0"/>
<path d="M26 515.5H403" stroke="#ececec"/>
<path d="M184.5 496V515" stroke="#ececec"/>
<rect x="186.5" y="498.5" width="14.5" height="14.5" fill="#fff" stroke="#222"/>
<path d="M25.5 516V536" stroke="#a0a0a0"/>
<path d="M26 535.5H403" stroke="#ececec"/>
<path d="M184.5 516V535" stroke="#ececec"/>
<path d="M25.5 536V556" stroke="#a0a0a0"/>
<path d="M26 555.5H403" stroke="#ececec"/>
<path d="M184.5 536V555" stroke="#ececec"/>
<rect x="186.5" y="538.5" width="14.5" height="14.5" fill="#0000ee" stroke="#0000cc"/>
<path d="M25.5 556V576" stroke="#a0a0a0"/>
<path d="M26 575.5H403" stroke="#ececec"/>
<path d="M184.5 556V575" stroke="#ececec"/>
<path d="M187.5 573V558.5H201" stroke="#111" stroke-width="1.8" fill="none"/><path d="M190 565l3 3.5 6-7" stroke="#111" stroke-width="1.3" fill="none"/>
<path d="M25.5 576V596" stroke="#a0a0a0"/>
<path d="M26 595.5H403" stroke="#ececec"/>
<path d="M184.5 576V595" stroke="#ececec"/>
<path d="M25.5 596V616" stroke="#a0a0a0"/>
<path d="M26 615.5H403" stroke="#ececec"/>
<path d="M184.5 596V615" stroke="#ececec"/>
<path d="M25.5 616V636" stroke="#a0a0a0"/>
<path d="M26 635.5H403" stroke="#ececec"/>
<path d="M184.5 616V635" stroke="#ececec"/>
<path d="M187.5 633V618.5H201" stroke="#111" stroke-width="1.8" fill="none"/><path d="M190 625l3 3.5 6-7" stroke="#111" stroke-width="1.3" fill="none"/>
<path d="M25.5 636V656" stroke="#a0a0a0"/>
<path d="M26 655.5H403" stroke="#ececec"/>
<path d="M184.5 636V655" stroke="#ececec"/>
<path d="M25.5 656V676" stroke="#a0a0a0"/>
<path d="M26 675.5H403" stroke="#ececec"/>
<path d="M184.5 656V675" stroke="#ececec"/>
<path d="M187.5 673V658.5H201" stroke="#111" stroke-width="1.8" fill="none"/><path d="M190 665l3 3.5 6-7" stroke="#111" stroke-width="1.3" fill="none"/>
<path d="M5 675.5H403" stroke="#a0a0a0"/>
<path d="M25 695.5H403" stroke="#a0a0a0"/>
<rect x="10.5" y="681.5" width="8" height="8" fill="#fff" stroke="#111" stroke-width="1"/><path d="M12.5 686h4" stroke="#111" stroke-width="1.4"/>
<path d="M25.5 696V716" stroke="#a0a0a0"/>
<path d="M26 715.5H403" stroke="#ececec"/>
<path d="M184.5 696V715" stroke="#ececec"/>
<path d="M5 715.5H403" stroke="#a0a0a0"/>
<path d="M25 735.5H403" stroke="#a0a0a0"/>
<rect x="10.5" y="721.5" width="8" height="8" fill="#fff" stroke="#111" stroke-width="1"/><path d="M12.5 726h4" stroke="#111" stroke-width="1.4"/>
<path d="M25.5 736V756" stroke="#a0a0a0"/>
<path d="M26 755.5H403" stroke="#ececec"/>
<path d="M184.5 736V755" stroke="#ececec"/>
<path d="M25.5 756V776" stroke="#a0a0a0"/>
<path d="M26 775.5H403" stroke="#ececec"/>
<path d="M184.5 756V775" stroke="#ececec"/>
<path d="M25.5 776V796" stroke="#a0a0a0"/>
<path d="M26 795.5H403" stroke="#ececec"/>
<path d="M184.5 776V795" stroke="#ececec"/>
<path d="M25.5 796V816" stroke="#a0a0a0"/>
<path d="M26 815.5H403" stroke="#ececec"/>
<path d="M184.5 796V815" stroke="#ececec"/>
<path d="M25.5 816V836" stroke="#a0a0a0"/>
<path d="M26 835.5H403" stroke="#ececec"/>
<path d="M184.5 816V835" stroke="#ececec"/>
<path d="M5 835.5H403" stroke="#a0a0a0"/>
<rect x="10.5" y="841.5" width="8" height="8" fill="#fff" stroke="#111" stroke-width="1"/><path d="M12.5 846h4" stroke="#111" stroke-width="1.4"/>
</svg>
<div class="a" style="left:4px;top:711px;width:1px;height:142px;background:#111"></div>
<div class="a" style="left:4px;top:852px;width:421px;height:1px;background:#111"></div><div class="a" style="left:4px;top:853px;width:422px;height:1px;background:#fafafa"></div>
<div class="a" style="left:424px;top:711px;width:1px;height:142px;background:#111"></div>
<div class="t" style="left:0.5px;top:867.5px;font-size:13.6px;color:#111">Object: SystemVariable1</div><!--/LEFT-->
<!--CENTER--><svg style="left:433px;top:169px" width="16" height="18"><rect x="0.5" y="0.5" width="15" height="17" rx="1.5" fill="#4a6a98" stroke="#3a4a68"/><rect x="2" y="3" width="3" height="13" fill="#e8eef8"/><rect x="6" y="3" width="8" height="13" fill="#fff"/><path d="M7 5.5h6M7 8.5h6M7 11.5h6M7 14h6" stroke="#3a7ad8" stroke-width="1.5"/><path d="M2.5 6h2M2.5 9h2M2.5 12h2" stroke="#556"/></svg>
<div class="a" style="left:456px;top:170px;width:922px;height:18px;background:#fff"></div>
<div class="a" style="left:433px;top:192px;width:17px;height:138px;background:#fff"></div>
<div class="a" style="left:433px;top:348px;width:17px;height:63px;background:#fff"></div>
<div class="a" style="left:433px;top:429px;width:17px;height:56px;background:#fff"></div>
<svg style="left:0;top:0" width="1654" height="885">
<path d="M456.5 170.5V174.5M470.5 170.5V174.5M484.5 170.5V186.5M497.5 170.5V174.5M510.5 170.5V174.5M524.5 170.5V174.5M538.5 170.5V178.5M551.5 170.5V174.5M564.5 170.5V174.5M578.5 170.5V174.5M592.5 170.5V186.5M605.5 170.5V174.5M618.5 170.5V174.5M632.5 170.5V174.5M646.5 170.5V178.5M659.5 170.5V174.5M672.5 170.5V174.5M686.5 170.5V174.5M700.5 170.5V186.5M713.5 170.5V174.5M726.5 170.5V174.5M740.5 170.5V174.5M754.5 170.5V178.5M767.5 170.5V174.5M780.5 170.5V174.5M794.5 170.5V174.5M808.5 170.5V186.5M821.5 170.5V174.5M834.5 170.5V174.5M848.5 170.5V174.5M862.5 170.5V178.5M875.5 170.5V174.5M888.5 170.5V174.5M902.5 170.5V174.5M916.5 170.5V186.5M929.5 170.5V174.5M942.5 170.5V174.5M956.5 170.5V174.5M970.5 170.5V178.5M983.5 170.5V174.5M996.5 170.5V174.5M1010.5 170.5V174.5M1024.5 170.5V186.5M1037.5 170.5V174.5M1050.5 170.5V174.5M1064.5 170.5V174.5M1078.5 170.5V178.5M1091.5 170.5V174.5M1104.5 170.5V174.5M1118.5 170.5V174.5M1132.5 170.5V186.5M1145.5 170.5V174.5M1158.5 170.5V174.5M1172.5 170.5V174.5M1186.5 170.5V178.5M1199.5 170.5V174.5M1212.5 170.5V174.5M1226.5 170.5V174.5M1240.5 170.5V186.5M1253.5 170.5V174.5M1266.5 170.5V174.5M1280.5 170.5V174.5M1294.5 170.5V178.5M1307.5 170.5V174.5M1320.5 170.5V174.5M1334.5 170.5V174.5M1348.5 170.5V186.5M1361.5 170.5V174.5M1374.5 170.5V174.5" stroke="#111" stroke-width="1"/>
<text x="486.5" y="185" font-size="10.5" fill="#111">0</text>
<text x="594.5" y="185" font-size="10.5" fill="#111">1</text>
<text x="702.5" y="185" font-size="10.5" fill="#111">2</text>
<text x="810.5" y="185" font-size="10.5" fill="#111">3</text>
<text x="918.5" y="185" font-size="10.5" fill="#111">4</text>
<text x="1026.5" y="185" font-size="10.5" fill="#111">5</text>
<text x="1134.5" y="185" font-size="10.5" fill="#111">6</text>
<text x="1242.5" y="185" font-size="10.5" fill="#111">7</text>
<text x="1350.5" y="185" font-size="10.5" fill="#111">8</text>
<path d="M433 194.5h4M433 208.5h4M433 221.5h17M433 234.5h4M433 248.5h4M433 262.5h4M433 275.5h8M433 288.5h4M433 302.5h4M433 316.5h4M433 329.5h17M433 362.5h4M433 376.5h4M433 389.5h4M433 402.5h8M433 443.5h4M433 456.5h4M433 470.5h4M433 483.5h8" stroke="#111" stroke-width="1.2"/>
<text x="442.5" y="233" font-size="10.5" fill="#111">0</text>
<text x="442.5" y="360" font-size="10.5" fill="#111">0</text>
<text x="442.5" y="441" font-size="10.5" fill="#111">0</text>
</svg>
<div class="a" style="left:456px;top:193.5px;width:919px;height:137px;background:#fff"></div>
<div class="a" style="left:456px;top:347.5px;width:919px;height:64px;background:#fff"></div>
<div class="a" style="left:456px;top:428px;width:919px;height:57px;background:#fff"></div>
<div class="a" style="left:456px;top:502.5px;width:919px;height:27.5px;background:#fff"></div>
<div class="a" style="left:456px;top:530px;width:927px;height:304px;background:#a0a0a0"></div>
<div class="a" style="left:1375px;top:194px;width:8px;height:340px;background:#a0a0a0"></div>
<svg style="left:0;top:0" width="1654" height="885">
<defs><pattern id="dots" x="483" y="222" width="7" height="7" patternUnits="userSpaceOnUse"><rect x="0" y="0" width="1" height="1" fill="#8c8c8c"/></pattern>
<pattern id="dots2" x="483" y="349" width="7" height="7" patternUnits="userSpaceOnUse"><rect x="0" y="0" width="1" height="1" fill="#8c8c8c"/></pattern>
<pattern id="dots3" x="483" y="430" width="7" height="7" patternUnits="userSpaceOnUse"><rect x="0" y="0" width="1" height="1" fill="#8c8c8c"/></pattern></defs>
<rect x="490" y="229" width="856" height="100" fill="url(#dots)"/>
<rect x="490" y="349" width="856" height="62" fill="url(#dots2)"/>
<rect x="490" y="430" width="856" height="55" fill="url(#dots3)"/>
<path d="M483.5 330V221.5H1348.5V330M483.5 347.5V411.5M1348.5 347.5V411.5M483.5 428V485M1348.5 428V485" stroke="#2b6aa0" stroke-width="1.3" fill="none"/>
<path d="M465.5 339.3l3.5-3.5 3.5 3.5" stroke="#222" stroke-width="1.1" fill="none"/>
<path d="M465.5 420.3l3.5-3.5 3.5 3.5" stroke="#222" stroke-width="1.1" fill="none"/>
<path d="M465.5 494.3l3.5-3.5 3.5 3.5" stroke="#222" stroke-width="1.1" fill="none"/>
</svg>
<div class="t" style="left:482px;top:333.7px;font-size:12.8px;color:#111">Header</div>
<div class="t" style="left:482px;top:414.7px;font-size:12.8px;color:#111">Detail</div>
<div class="t" style="left:482px;top:488.7px;font-size:12.8px;color:#111">Footer</div>
<svg style="left:0;top:0" width="1654" height="885"><g fill="none" stroke="#606060" stroke-width="1" stroke-dasharray="3 3">
<rect x="759" y="240.5" width="345" height="39.0"/>
<rect x="488.5" y="302.5" width="77.5" height="20.0"/>
<rect x="639" y="302.5" width="31.5" height="20.0"/>
<rect x="790" y="302.5" width="43" height="20.0"/>
<rect x="942.5" y="302.5" width="79.5" height="20.0"/>
<rect x="1089" y="302.5" width="121" height="20.0"/>
<rect x="1217" y="302.5" width="132" height="20.0"/>
<rect x="488.5" y="356" width="147.5" height="21"/>
<rect x="639" y="356" width="147.5" height="21"/>
<rect x="790" y="356" width="148" height="21"/>
<rect x="942.5" y="356" width="146.5" height="21"/>
<rect x="1093" y="356" width="111.5" height="21"/>
<rect x="1217" y="356" width="121.5" height="21"/>
<rect x="499" y="452" width="172.5" height="24"/>
<rect x="1230.5" y="452.5" width="92.5" height="20.0"/>
</g>
<circle cx="499" cy="451.5" r="4" fill="none" stroke="#111" stroke-width="1.2"/>
<circle cx="499" cy="463.5" r="4" fill="none" stroke="#111" stroke-width="1.2"/>
<circle cx="499" cy="476" r="4" fill="none" stroke="#111" stroke-width="1.2"/>
<circle cx="585.5" cy="451.5" r="4" fill="none" stroke="#111" stroke-width="1.2"/>
<circle cx="585.5" cy="476" r="4" fill="none" stroke="#111" stroke-width="1.2"/>
<circle cx="671.5" cy="451.5" r="4" fill="none" stroke="#111" stroke-width="1.2"/>
<circle cx="671.5" cy="463.5" r="4" fill="none" stroke="#111" stroke-width="1.2"/>
<circle cx="671.5" cy="476" r="4" fill="none" stroke="#111" stroke-width="1.2"/>
</svg>
<div class="t" style="left:760.5px;top:247.84px;font-size:28.3px;font-weight:bold;color:#000;transform:scaleY(1.12);transform-origin:0 23.96px">Equipment Service Dates</div>
<div class="t" style="left:489px;top:305.42px;font-size:16.4px;letter-spacing:0.65px;color:#000;-webkit-text-stroke:0.2px #000;transform:scaleY(1.065);transform-origin:0 13.88px">Company</div>
<div class="t" style="left:640px;top:305.42px;font-size:16.4px;letter-spacing:0.65px;color:#000;-webkit-text-stroke:0.2px #000;transform:scaleY(1.065);transform-origin:0 13.88px">I.D.</div>
<div class="t" style="left:791.5px;top:305.42px;font-size:16.4px;letter-spacing:0.65px;color:#000;-webkit-text-stroke:0.2px #000;transform:scaleY(1.065);transform-origin:0 13.88px">Type</div>
<div class="t" style="left:943px;top:305.42px;font-size:16.4px;letter-spacing:0.65px;color:#000;-webkit-text-stroke:0.2px #000;transform:scaleY(1.065);transform-origin:0 13.88px">Sub-Type</div>
<div class="t" style="left:1090.4px;top:305.42px;font-size:16.4px;letter-spacing:0.65px;color:#000;-webkit-text-stroke:0.2px #000;transform:scaleY(1.065);transform-origin:0 13.88px">Purchase Date</div>
<div class="t" style="left:1218px;top:305.42px;font-size:16.4px;letter-spacing:0.65px;color:#000;-webkit-text-stroke:0.2px #000;transform:scaleY(1.065);transform-origin:0 13.88px">Retirement Date</div>
<div class="t" style="left:489px;top:359.62px;font-size:16.4px;letter-spacing:0.65px;color:#000;-webkit-text-stroke:0.2px #000;transform:scaleY(1.065);transform-origin:0 13.88px">test co 4</div>
<div class="t" style="left:639.5px;top:359.62px;font-size:16.4px;letter-spacing:0.65px;color:#000;-webkit-text-stroke:0.2px #000;transform:scaleY(1.065);transform-origin:0 13.88px">master1</div>
<div class="t" style="left:1093.5px;top:359.62px;font-size:16.4px;letter-spacing:0.65px;color:#000;-webkit-text-stroke:0.2px #000;transform:scaleY(1.065);transform-origin:0 13.88px">11/9/2022</div>
<div class="t" style="left:501px;top:454.62px;font-size:16.4px;letter-spacing:0.65px;color:#000;-webkit-text-stroke:0.2px #000;transform:scaleY(1.065);transform-origin:0 13.88px">3/7/2023 3:14:05 PM</div>
<div class="t" style="left:1231px;top:455.22px;font-size:16.4px;letter-spacing:0.65px;color:#000;-webkit-text-stroke:0.2px #000;transform:scaleY(1.065);transform-origin:0 13.88px">Page 1 of 1</div>
<svg style="left:0;top:0" width="1654" height="885"><path d="M468 840.5v9l-6-4.5z" fill="#888"/><path d="M1369 840.5v9l6-4.5z" fill="#555"/><rect x="477" y="840" width="799" height="10" rx="3" fill="#858585"/></svg><!--/CENTER-->
<!--RIGHT--><div class="a" style="left:1384px;top:166px;width:268px;height:28px;background:#efefef"></div>
<div class="t" style="left:1390px;top:174px;font-size:14.3px;color:#111">Data Tree</div>
<svg style="left:1632px;top:174px" width="12" height="12"><path d="M2 2.5l7.5 7.5M9.5 2.5l-7.5 7.5" stroke="#111" stroke-width="1.6"/></svg>
<div class="a" style="left:1384px;top:194px;width:268px;height:188px;background:#fff"></div><div class="a" style="left:1651px;top:166px;width:1px;height:686px;background:#e0e0e0"></div>
<div class="a" style="left:1411px;top:197px;width:97px;height:18px;background:#d9d9d9;border-radius:2px"></div>
<svg style="left:0;top:0" width="1654" height="885">
<path d="M1399 206.5h12" stroke="#666" stroke-dasharray="1 1"/>
<rect x="1415.5" y="198.5" width="15" height="15" rx="2" fill="#dfe6f4" stroke="#5a70a8"/><path d="M1416 202.5h14M1416 206h14M1416 209.5h14M1420 202v11M1425 202v11" stroke="#7a8cc0"/>
<path d="M1607 195.5h1.5M1615 195.5h11M1632 195.5h3" stroke="#222" stroke-width="1.2"/>
</svg>
<div class="t" style="left:1438px;top:199px;font-size:13.8px;color:#111">Equipment</div>
<div class="a" style="left:1385px;top:382px;width:266px;height:21px;background:#efefef"></div>
<div class="t" style="left:1390px;top:385.5px;font-size:13.6px;color:#111">Fields for Equipment</div>
<div class="a" style="left:1385px;top:403px;width:267px;height:401px;background:#fff"></div>
<svg style="left:0;top:0" width="1654" height="885"><path d="M1548.5 404V425M1636.5 404V425" stroke="#e6e6e6"/></svg>
<div class="t" style="left:1392px;top:408px;font-size:13.6px;color:#111">Name</div>
<div class="t" style="left:1555px;top:408px;font-size:13.6px;color:#111">Type</div>
<div class="t" style="left:1643px;top:408px;font-size:13.6px;color:#111">S</div>
<div class="a" style="left:1407px;top:427.5px;width:140px;height:41px;background:#d9d9d9;border-radius:3px"></div>
<div class="a" style="left:1407px;top:490px;width:140px;height:84px;background:#d9d9d9;border-radius:3px"></div>
<div class="t" style="left:1412px;top:430.8px;font-size:14px;color:#111">Company</div>
<div class="t" style="left:1555px;top:430.8px;font-size:14px;color:#111">String</div>
<div class="t" style="left:1643px;top:430.8px;font-size:14px;color:#111">5</div>
<div class="t" style="left:1412px;top:451.8px;font-size:14px;color:#111">I.D.</div>
<div class="t" style="left:1555px;top:451.8px;font-size:14px;color:#111">String</div>
<div class="t" style="left:1643px;top:451.8px;font-size:14px;color:#111">5</div>
<div class="t" style="left:1412px;top:472.8px;font-size:14px;color:#111">Gage Id</div>
<div class="t" style="left:1555px;top:472.8px;font-size:14px;color:#111">String</div>
<div class="t" style="left:1643px;top:472.8px;font-size:14px;color:#111">5</div>
<div class="t" style="left:1412px;top:493.8px;font-size:14px;color:#111">Type</div>
<div class="t" style="left:1555px;top:493.8px;font-size:14px;color:#111">String</div>
<div class="t" style="left:1643px;top:493.8px;font-size:14px;color:#111">6</div>
<div class="t" style="left:1412px;top:514.8px;font-size:14px;color:#111">Sub-Type</div>
<div class="t" style="left:1555px;top:514.8px;font-size:14px;color:#111">String</div>
<div class="t" style="left:1643px;top:514.8px;font-size:14px;color:#111">6</div>
<div class="t" style="left:1412px;top:535.8px;font-size:14px;color:#111">Purchase Date</div>
<div class="t" style="left:1555px;top:535.8px;font-size:14px;color:#111">DateTime</div>
<div class="t" style="left:1412px;top:556.8px;font-size:14px;color:#111">Retirement Date</div>
<div class="t" style="left:1555px;top:556.8px;font-size:14px;color:#111">DateTime</div>
<div class="t" style="left:1412px;top:577.8px;font-size:14px;color:#111">Active</div>
<div class="t" style="left:1555px;top:577.8px;font-size:14px;color:#111">String</div>
<div class="t" style="left:1643px;top:577.8px;font-size:14px;color:#111">1</div>
<svg style="left:0;top:0" width="1654" height="885">
<path d="M1385.5 428V595" stroke="#223" stroke-width="1" stroke-dasharray="19 2"/>
<rect x="1390.5" y="427.8" width="15" height="15" fill="#f4f6fc" stroke="#5a70b0"/><rect x="1391" y="428.3" width="14" height="2" fill="#7a98d8"/><path d="M1393 432.8h3M1393 435.8h3M1393 438.8h3" stroke="#8a9cc8"/><rect x="1398.5" y="433.8" width="10" height="11" rx="1" fill="#fff" stroke="#5a70b0"/><rect x="1400" y="435.3" width="7" height="8" fill="#4f82d6"/><path d="M1401 437.3l2.5 3 2.5-3" stroke="#fff" fill="none" stroke-width="1"/>
<rect x="1390.5" y="448.8" width="15" height="15" fill="#f4f6fc" stroke="#5a70b0"/><rect x="1391" y="449.3" width="14" height="2" fill="#7a98d8"/><path d="M1393 453.8h3M1393 456.8h3M1393 459.8h3" stroke="#8a9cc8"/><rect x="1398.5" y="454.8" width="10" height="11" rx="1" fill="#fff" stroke="#5a70b0"/><rect x="1400" y="456.3" width="7" height="8" fill="#4f82d6"/><path d="M1401 458.3l2.5 3 2.5-3" stroke="#fff" fill="none" stroke-width="1"/>
<rect x="1390.5" y="469.8" width="15" height="15" fill="#f4f6fc" stroke="#5a70b0"/><rect x="1391" y="470.3" width="14" height="2" fill="#7a98d8"/><path d="M1393 474.8h3M1393 477.8h3M1393 480.8h3" stroke="#8a9cc8"/><rect x="1398.5" y="475.8" width="10" height="11" rx="1" fill="#fff" stroke="#5a70b0"/><rect x="1400" y="477.3" width="7" height="8" fill="#4f82d6"/><path d="M1401 479.3l2.5 3 2.5-3" stroke="#fff" fill="none" stroke-width="1"/>
<rect x="1390.5" y="490.8" width="15" height="15" fill="#f4f6fc" stroke="#5a70b0"/><rect x="1391" y="491.3" width="14" height="2" fill="#7a98d8"/><path d="M1393 495.8h3M1393 498.8h3M1393 501.8h3" stroke="#8a9cc8"/><rect x="1398.5" y="496.8" width="10" height="11" rx="1" fill="#fff" stroke="#5a70b0"/><rect x="1400" y="498.3" width="7" height="8" fill="#4f82d6"/><path d="M1401 500.3l2.5 3 2.5-3" stroke="#fff" fill="none" stroke-width="1"/>
<rect x="1390.5" y="511.79999999999995" width="15" height="15" fill="#f4f6fc" stroke="#5a70b0"/><rect x="1391" y="512.3" width="14" height="2" fill="#7a98d8"/><path d="M1393 516.8h3M1393 519.8h3M1393 522.8h3" stroke="#8a9cc8"/><rect x="1398.5" y="517.8" width="10" height="11" rx="1" fill="#fff" stroke="#5a70b0"/><rect x="1400" y="519.3" width="7" height="8" fill="#4f82d6"/><path d="M1401 521.3l2.5 3 2.5-3" stroke="#fff" fill="none" stroke-width="1"/>
<rect x="1390.5" y="532.8" width="15" height="15" fill="#f4f6fc" stroke="#5a70b0"/><rect x="1391" y="533.3" width="14" height="2" fill="#7a98d8"/><path d="M1393 537.8h3M1393 540.8h3M1393 543.8h3" stroke="#8a9cc8"/><rect x="1398.5" y="538.8" width="10" height="11" rx="1" fill="#fff" stroke="#5a70b0"/><rect x="1400" y="540.3" width="7" height="8" fill="#4f82d6"/><path d="M1401 542.3l2.5 3 2.5-3" stroke="#fff" fill="none" stroke-width="1"/>
<rect x="1390.5" y="553.8" width="15" height="15" fill="#f4f6fc" stroke="#5a70b0"/><rect x="1391" y="554.3" width="14" height="2" fill="#7a98d8"/><path d="M1393 558.8h3M1393 561.8h3M1393 564.8h3" stroke="#8a9cc8"/><rect x="1398.5" y="559.8" width="10" height="11" rx="1" fill="#fff" stroke="#5a70b0"/><rect x="1400" y="561.3" width="7" height="8" fill="#4f82d6"/><path d="M1401 563.3l2.5 3 2.5-3" stroke="#fff" fill="none" stroke-width="1"/>
<rect x="1390.5" y="574.8" width="15" height="15" fill="#f4f6fc" stroke="#5a70b0"/><rect x="1391" y="575.3" width="14" height="2" fill="#7a98d8"/><path d="M1393 579.8h3M1393 582.8h3M1393 585.8h3" stroke="#8a9cc8"/><rect x="1398.5" y="580.8" width="10" height="11" rx="1" fill="#fff" stroke="#5a70b0"/><rect x="1400" y="582.3" width="7" height="8" fill="#4f82d6"/><path d="M1401 584.3l2.5 3 2.5-3" stroke="#fff" fill="none" stroke-width="1"/>
</svg>
<div class="a" style="left:1385px;top:804px;width:267px;height:20px;background:#efefef"></div>
<div class="a" style="left:1407px;top:810.5px;width:200px;height:6px;background:#858585"></div>
<div class="a" style="left:1385px;top:824px;width:266px;height:28px;background:#fff"></div>
<svg style="left:0;top:0" width="1654" height="885">
<path d="M1385 824.5H1650.5V851.5" stroke="#111" fill="none" stroke-width="1.2"/>
<path d="M1385 852.5H1608" stroke="#111" stroke-width="1.4"/>
<path d="M1394.5 824V851.5H1436.5V824" stroke="#111" fill="none" stroke-width="1.2"/>
<path d="M1492.5 827V848" stroke="#888"/>
</svg>
<div class="t" style="left:1400.5px;top:831px;font-size:14.3px;color:#111">Data</div>
<div class="t" style="left:1444px;top:831px;font-size:14.3px;color:#111">Layout</div>
<svg style="left:0;top:0" width="1654" height="885">
<path d="M942.5 860V885M1055.5 860V885M1168.5 860V885M1281.5 860V885M1394.5 860V885" stroke="#a0a0a0"/>
<rect x="1456.5" y="866.5" width="173" height="11" fill="#e6e6e6" stroke="#dadada"/>
<path d="M1474 868l3.5-4 3.5 4v9h-7z" fill="#0a74d4"/>
<path d="M1640 884l13-13M1645 884l8-8M1650 884l3-3" stroke="#bbb"/>
</svg>
<div class="t" style="left:947.5px;top:867px;font-size:14.3px;color:#111">Left: 0.1583</div>
<div class="t" style="left:1061px;top:867px;font-size:14.3px;color:#111">Top: 0.2167</div>
<div class="t" style="left:1174px;top:867px;font-size:14.3px;color:#111">Width: 1.5583</div>
<div class="t" style="left:1287px;top:867px;font-size:14.3px;color:#111">Height: 0.1917</div>
<div class="t" style="left:1400.5px;top:867px;font-size:14.3px;color:#111">90%</div><!--/RIGHT-->

<!--ANNOT--><svg style="left:0;top:0" width="1654" height="885">
<!-- Data tab icon -->
<g fill="#dfe6f6" stroke="#4a62a8" stroke-width="1.4"><rect x="10.7" y="80.5" width="6" height="5.5"/><rect x="19.5" y="74.7" width="9.5" height="6"/><rect x="19.5" y="86" width="9.5" height="6"/></g>
<path d="M16.7 83.2h2.8M19.5 80.5v5.5" stroke="#4a62a8" stroke-width="1.4"/>
<!-- Calc -->
<rect x="78" y="75" width="17" height="17" rx="2.5" fill="#17a7ae"/><rect x="80" y="77" width="13" height="3" fill="#cfeff0"/>
<g fill="#0d3d52"><rect x="80.5" y="82" width="2.2" height="2.2"/><rect x="84.5" y="82" width="2.2" height="2.2"/><rect x="88.5" y="82" width="2.2" height="2.2" fill="#d33"/><rect x="80.5" y="86.5" width="2.2" height="2.2"/><rect x="84.5" y="86.5" width="2.2" height="2.2"/><rect x="88.5" y="86.5" width="2.2" height="2.2"/></g>
<path d="M71.5 73V94M214.5 73V94M297.5 73V94" stroke="#a8a8a8"/>
<!-- Design -->
<rect x="138.5" y="78.5" width="16" height="10" fill="#dfe8f6" stroke="#5a6ea8" stroke-width="1.2"/><path d="M140 86l3-2 3 1" stroke="#4a5aa8" fill="none"/>
<path d="M146 85l9-9 2 2-9 9z" fill="#6a8ad0" stroke="#334"  stroke-width="0.7"/><path d="M155 76l2-2 2 2-2 2z" fill="#e0c040"/>
<!-- Preview -->
<path d="M219.5 74.5h10l3 3v14h-13z" fill="#f2f2f8" stroke="#7a7a98"/><circle cx="230" cy="87" r="4" fill="#c8d8f0" stroke="#555"/><path d="M233 90l4 4" stroke="#c09040" stroke-width="2.2"/>
</svg>
<svg style="left:0;top:0" width="1654" height="885">
<defs><filter id="sh" x="-20%" y="-20%" width="140%" height="140%"><feGaussianBlur in="SourceAlpha" stdDeviation="1.5"/><feOffset dx="0" dy="1"/><feComponentTransfer><feFuncA type="linear" slope="0.35"/></feComponentTransfer><feMerge><feMergeNode/><feMergeNode in="SourceGraphic"/></feMerge></filter></defs>
<g filter="url(#sh)">
<rect x="6" y="129.2" width="102" height="36.6" rx="4" fill="none" stroke="#7b68ee" stroke-width="4"/>
<ellipse cx="207.7" cy="119.4" rx="19.2" ry="20.5" fill="none" stroke="#7b68ee" stroke-width="4"/>
<linearGradient id="ag" gradientUnits="userSpaceOnUse" x1="250" y1="179" x2="480" y2="434"><stop offset="0" stop-color="#b4a8f4"/><stop offset="0.35" stop-color="#8f80f0"/><stop offset="1" stop-color="#7b68ee"/></linearGradient><polygon points="249.9,179.9 251.3,178.8 482.6,432.2 479.0,435.5" fill="url(#ag)"/>
<polygon points="491.8,445.7 474,439.3 487.5,428.3" fill="#7b68ee"/>
</g>
</svg><!--/ANNOT-->
</body></html>
